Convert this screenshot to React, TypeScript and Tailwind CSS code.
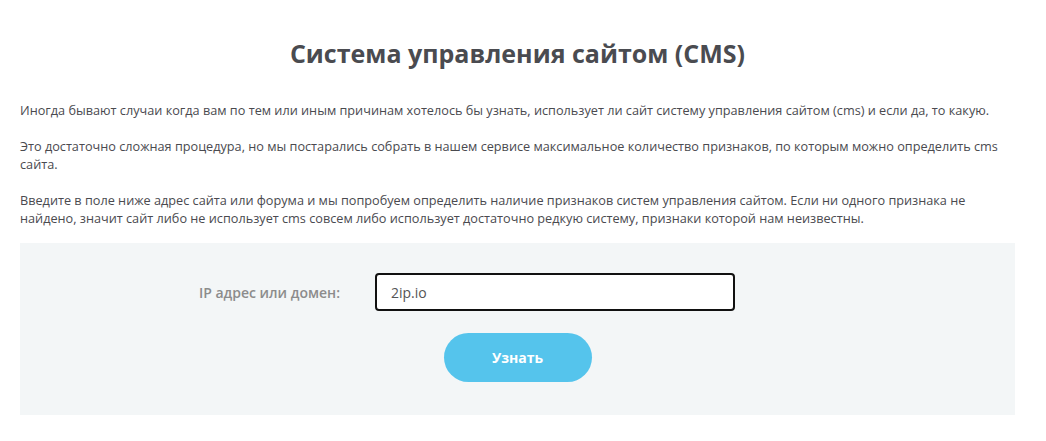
export default function App() {
  return (
    <div className="min-h-screen bg-white font-['Open_Sans',sans-serif] text-[#4a4a4f]">
      <div className="mx-[20px] w-[995px] pt-[38px]">
        <h1 className="text-center text-[25px] font-bold leading-[30px] text-[#4a4b50]">
          Система управления сайтом (CMS)
        </h1>
        <div className="mt-[33px] text-[12.7px] leading-[18px]">
          <p>
            Иногда бывают случаи когда вам по тем или иным причинам хотелось бы узнать, использует ли сайт систему
            управления сайтом (cms) и если да, то какую.
          </p>
          <p className="mt-[18px]">
            Это достаточно сложная процедура, но мы постарались собрать в нашем сервисе максимальное количество
            признаков, по которым можно определить cms сайта.
          </p>
          <p className="mt-[18px]">
            Введите в поле ниже адрес сайта или форума и мы попробуем определить наличие признаков систем управления
            сайтом. Если ни одного признака не найдено, значит сайт либо не использует cms совсем либо использует
            достаточно редкую систему, признаки которой нам неизвестны.
          </p>
        </div>
        <div className="mt-[16px] h-[172px] bg-[#f3f6f7] pt-[30px]">
          <div className="flex items-center">
            <label className="w-[355px] pr-[35px] text-right text-[14px] font-semibold text-[#8c8c8c]">
              IP адрес или домен:
            </label>
            <input
              defaultValue="2ip.io"
              className="h-[38px] w-[360px] rounded-[4px] border-2 border-[#111] bg-white px-[14px] text-[14px] text-[#555] outline-none"
            />
          </div>
          <div className="mt-[22px] flex justify-center">
            <button className="h-[49px] w-[148px] rounded-full bg-[#55c4ec] text-[14px] font-bold text-white">
              Узнать
            </button>
          </div>
        </div>
      </div>
    </div>
  );
}
